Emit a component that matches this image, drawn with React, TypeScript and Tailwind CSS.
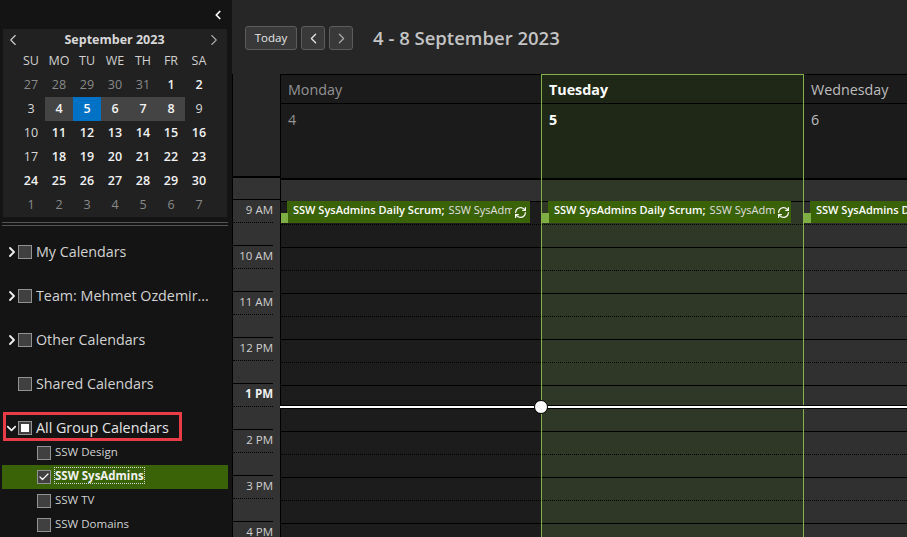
import type { ReactNode } from "react";
import { Check, ChevronDown, ChevronLeft, ChevronRight, RefreshCw } from "lucide-react";

const weeks = [
  [27, 28, 29, 30, 31, 1, 2],
  [3, 4, 5, 6, 7, 8, 9],
  [10, 11, 12, 13, 14, 15, 16],
  [17, 18, 19, 20, 21, 22, 23],
  [24, 25, 26, 27, 28, 29, 30],
  [1, 2, 3, 4, 5, 6, 7],
];
const weekdays = ["SU", "MO", "TU", "WE", "TH", "FR", "SA"];
const hours = ["9 AM", "10 AM", "11 AM", "12 PM", "1 PM", "2 PM", "3 PM", "4 PM"];

function dayClass(row: number, col: number) {
  if (row === 1 && col === 2) return "bg-[#0072c6] font-semibold text-white";
  if (row === 1 && col >= 1 && col <= 5) return "bg-[#444444] font-semibold text-[#f2f2f2]";
  if ((row === 0 && col < 5) || row === 5) return "text-[#8a8a8a]";
  if ((col === 0 && row < 4) || (col === 6 && row === 1)) return "text-[#d8d8d8]";
  return "font-semibold text-[#f2f2f2]";
}

function MiniCalendar() {
  return (
    <div className="mx-[3px] h-[188px] w-[224px] bg-[#212121] text-[12.5px]">
      <div className="flex h-[20px] items-center justify-between pl-[1px] pr-[4px] pt-[2px]">
        <ChevronLeft className="h-[18px] w-[18px] text-[#d0d0d0]" strokeWidth={1.5} />
        <span className="ml-[2px] font-bold text-[#d8d8d8]">September 2023</span>
        <ChevronRight className="h-[18px] w-[18px] text-[#a8a8a8]" strokeWidth={1.5} />
      </div>
      <div className="ml-[14px] grid w-[196px] grid-cols-7">
        {weekdays.map((d) => (
          <div key={d} className="flex h-[24px] items-center justify-center text-[#d0d0d0]">
            {d}
          </div>
        ))}
        {weeks.map((week, r) =>
          week.map((day, c) => (
            <div key={`${r}-${c}`} className={`flex h-[24px] items-center justify-center ${dayClass(r, c)}`}>
              {day}
            </div>
          )),
        )}
      </div>
    </div>
  );
}

function Box({ children }: { children?: ReactNode }) {
  return (
    <span className="flex h-[14px] w-[14px] shrink-0 items-center justify-center border border-[#929292] bg-[#404040]">
      {children}
    </span>
  );
}

function GroupRow({ label, arrow }: { label: string; arrow?: boolean }) {
  return (
    <div className="flex h-[44px] items-center text-[14.3px] text-[#d2d2d2]">
      <span className="flex w-[18px]">
        {arrow && <ChevronRight className="-mr-[2px] ml-[4px] h-[16px] w-[16px] text-[#f0f0f0]" strokeWidth={2.75} />}
      </span>
      <Box />
      <span className="ml-[4px] truncate">{label}</span>
    </div>
  );
}

function SubRow({ label, checked }: { label: string; checked?: boolean }) {
  return (
    <div
      className={`ml-[2px] flex h-[24px] w-[226px] items-center pl-[35px] text-[11.5px] ${
        checked ? "bg-[#3a6206] font-bold text-[#f2f2f2]" : "text-[#d2d2d2]"
      }`}
    >
      <Box>{checked && <Check className="h-[12px] w-[12px] text-white" strokeWidth={2.5} />}</Box>
      <span className="-mt-[2px] ml-[4px]">
        <span className={checked ? "outline-1 outline-dotted outline-[#d8d8d8]" : ""}>{label}</span>
      </span>
    </div>
  );
}

function Sidebar() {
  return (
    <aside className="flex w-[232px] shrink-0 flex-col bg-[#141414]">
      <div className="flex h-[29px] items-center justify-end pr-[7px]">
        <ChevronLeft className="h-[14px] w-[14px] text-white" strokeWidth={3} />
      </div>
      <MiniCalendar />
      <div className="ml-[2px] mt-[5px] h-[4px] w-[226px] border-y border-[#555555]" />
      <div className="mt-[4px]">
        <GroupRow label="My Calendars" arrow />
        <GroupRow label="Team: Mehmet Ozdemir..." arrow />
        <GroupRow label="Other Calendars" arrow />
        <GroupRow label="Shared Calendars" />
        <div className="relative flex h-[35px] items-center pt-[9px] text-[14.3px] text-[#e4e4e4]">
          <span className="flex w-[18px]">
            <ChevronDown className="ml-[4px] mt-[1px] h-[15px] w-[15px] shrink-0 text-[#f0f0f0]" strokeWidth={2.75} />
          </span>
          <Box>
            <span className="h-[8px] w-[8px] bg-white" />
          </Box>
          <span className="ml-[4px]">All Group Calendars</span>
          <span className="absolute left-[3px] top-[6px] h-[29px] w-[179px] border-[3px] border-[#ea3c46]" />
        </div>
        <SubRow label="SSW Design" />
        <SubRow label="SSW SysAdmins" checked />
        <SubRow label="SSW TV" />
        <SubRow label="SSW Domains" />
      </div>
    </aside>
  );
}

function NavButton({ children, wide }: { children: ReactNode; wide?: boolean }) {
  return (
    <button
      type="button"
      className={`flex h-[24px] items-center justify-center rounded-[3px] border border-[#5c5c5c] bg-[#393939] text-[11.5px] text-[#e8e8e8] ${
        wide ? "w-[52px]" : "w-[24px]"
      }`}
    >
      {children}
    </button>
  );
}

function Appointment({ clip }: { clip: string }) {
  return (
    <div className="absolute -top-[1px] left-0 h-[22px] w-[250px]">
      <span className="absolute bottom-0 left-0 h-[10px] w-[7px] bg-[#7fae45]" />
      <div className="ml-[6px] flex h-[22px] w-[243px] items-start bg-[#3a6206] pl-[6px] text-[11px] leading-[18px] text-[#e0e0e0]">
        <div className={`flex gap-[4px] overflow-hidden whitespace-nowrap ${clip}`}>
          <span className="font-semibold text-white">SSW SysAdmins Daily Scrum;</span>
          <span>SSW SysAdmins</span>
        </div>
        <RefreshCw className="ml-[2px] mt-[5px] h-[13px] w-[13px] shrink-0 text-white" strokeWidth={2.25} />
      </div>
    </div>
  );
}

function TimeColumn() {
  return (
    <div className="w-[48px] shrink-0 border-r border-black">
      <div className="h-[104px] border-b-2 border-black" />
      <div className="h-[22px] border-b border-black bg-[#333333]" />
      {hours.map((h) => (
        <div key={h} className="bg-[#333333] pr-[7px] text-right text-[11.5px] leading-[16px] text-[#cfcfcf]">
          <div
            className={`h-[23px] border-b border-dotted border-black pt-[2px] ${h === "1 PM" ? "font-bold text-[#f0f0f0]" : ""}`}
          >
            {h}
          </div>
          <div className="h-[23px] border-b border-black" />
        </div>
      ))}
    </div>
  );
}

function DayColumn({ kind, name, num }: { kind: "mon" | "tue" | "wed"; name: string; num: string }) {
  const today = kind === "tue";
  const head = today
    ? "bg-[#1f2716] font-bold text-white"
    : kind === "mon"
      ? "bg-[#1b1b1b] text-[#939393]"
      : "bg-[#1b1b1b] text-[#bdbdbd]";
  const body = today ? "bg-[#2f3827]" : kind === "mon" ? "bg-[#1c1c1c]" : "bg-[#303030]";
  const band = today ? "bg-[#2f3827]" : "bg-[#303030]";
  const clip = kind === "mon" ? "w-[219px]" : "w-[221px]";
  return (
    <div
      className={
        today
          ? "w-[263px] shrink-0 border-x border-[#84b04a]"
          : kind === "mon"
            ? "w-[260px] shrink-0"
            : "min-w-0 flex-1 overflow-hidden"
      }
    >
      <div
        className={`h-[30px] border-b ${today ? "border-t border-b-black border-t-[#84b04a]" : "border-y border-black"} px-[7px] pt-[4px] text-[14.3px] leading-[22px] ${head}`}
      >
        {name}
      </div>
      <div className={`h-[76px] border-b-2 border-black px-[7px] pt-[5px] text-[14.3px] leading-[22px] ${head}`}>{num}</div>
      <div className={`h-[22px] border-b border-black ${band}`} />
      {hours.map((h, i) => (
        <div key={h} className={`relative ${body}`}>
          <div className="h-[23px] border-b border-dotted border-black" />
          <div className="h-[23px] border-b border-black" />
          {i === 0 && <Appointment clip={clip} />}
        </div>
      ))}
    </div>
  );
}

export default function App() {
  return (
    <div className="flex h-[537px] w-[907px] overflow-hidden bg-[#262626] font-['Open_Sans','Noto_Sans',sans-serif]">
      <Sidebar />
      <main className="flex min-w-0 flex-1 flex-col">
        <div className="flex h-[74px] shrink-0 items-start pl-[13px] pt-[26px]">
          <NavButton wide>Today</NavButton>
          <span className="ml-[4px]">
            <NavButton>
              <ChevronLeft className="h-[17px] w-[17px]" strokeWidth={1.75} />
            </NavButton>
          </span>
          <span className="ml-[4px]">
            <NavButton>
              <ChevronRight className="h-[17px] w-[17px] text-[#a8a8a8]" strokeWidth={1.75} />
            </NavButton>
          </span>
          <h1 className="ml-[20px] text-[18.5px] font-semibold leading-[24px] text-[#c4c4c4]">4 - 8 September 2023</h1>
        </div>
        <div className="relative flex flex-1 overflow-hidden border-l border-black">
          <TimeColumn />
          <DayColumn kind="mon" name="Monday" num="4" />
          <DayColumn kind="tue" name="Tuesday" num="5" />
          <DayColumn kind="wed" name="Wednesday" num="6" />
          <div className="absolute left-[47px] right-0 top-[331px] h-[4px] border-y border-black bg-white" />
          <div className="absolute left-[301px] top-[326px] h-[14px] w-[14px] rounded-full border border-black bg-white" />
        </div>
      </main>
    </div>
  );
}
